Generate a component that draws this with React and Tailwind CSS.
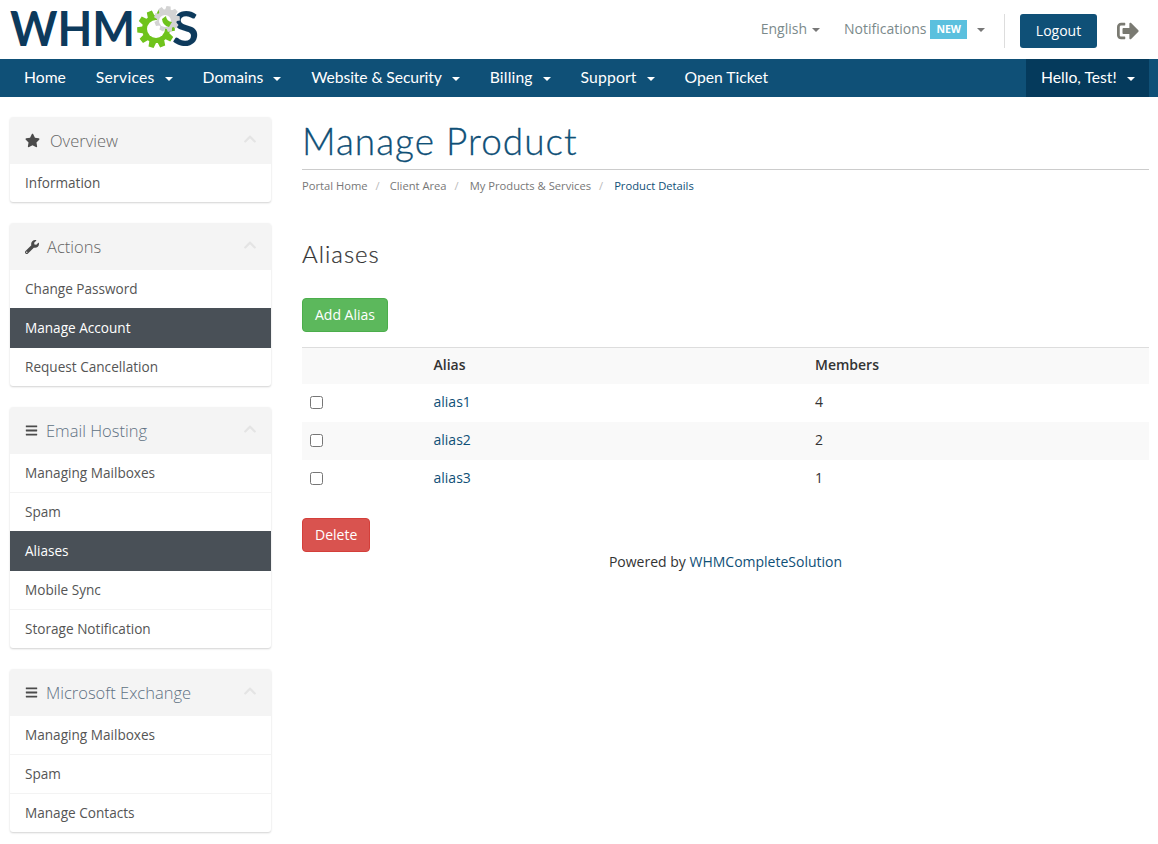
import React from "react";
import { FaStar, FaWrench, FaBars, FaChevronUp, FaSignOutAlt } from "react-icons/fa";

const gearPoints = (cx, cy, outer, inner, teeth) => {
  const pts = [];
  const step = (Math.PI * 2) / teeth;
  for (let i = 0; i < teeth; i++) {
    const a = i * step;
    [
      [-0.5, inner],
      [-0.3, outer],
      [0.15, outer],
      [0.3, inner],
    ].forEach(([f, r]) => {
      const t = a + f * step;
      pts.push(`${(cx + Math.cos(t) * r).toFixed(1)},${(cy + Math.sin(t) * r).toFixed(1)}`);
    });
  }
  return pts.join(" ");
};

const Logo = () => (
  <svg width="210" height="59" viewBox="0 0 210 59" className="block shrink-0">
    <text x="10" y="46" fontFamily="Lato" fontWeight="700" fontSize="48" fill="#0d3a5c" textLength="125" lengthAdjust="spacingAndGlyphs">
      WHM
    </text>
    <text x="172" y="46" fontFamily="Lato" fontWeight="700" fontSize="48" fill="#0d3a5c" textLength="27" lengthAdjust="spacingAndGlyphs">
      S
    </text>
    <polygon points={gearPoints(156, 29, 19, 14, 10)} fill="#6fc31c" />
    <circle cx="156" cy="29" r="9" fill="#fff" />
    <polygon points={gearPoints(167, 19, 13, 10, 9)} fill="#d3d3d3" />
    <circle cx="165" cy="21" r="6" fill="#fff" />
    <path d="M166 16 A6 6 0 0 0 172 22 L169 27 A9 9 0 0 1 162 19 Z" fill="#6fc31c" />
  </svg>
);

const Caret = ({ className = "" }) => (
  <span className={`inline-block w-0 h-0 border-x-[4px] border-x-transparent border-t-[4px] ${className}`} />
);

const navItems = [
  ["Home", false, ""],
  ["Services", true, "tracking-[0.25px]"],
  ["Domains", true, ""],
  ["Website & Security", true, "tracking-[-0.1px]"],
  ["Billing", true, "tracking-[0.15px]"],
  ["Support", true, "tracking-[0.15px]"],
  ["Open Ticket", false, ""],
];

const panels = [
  { title: "Overview", icon: <FaStar className="text-[15px] text-[#4b4b4b]" />, gap: "ml-[10px]", items: ["Information"] },
  { title: "Actions", icon: <FaWrench className="text-[14px] text-[#4b4b4b]" />, gap: "ml-[8px]", items: ["Change Password", "*Manage Account", "Request Cancellation"] },
  { title: "Email Hosting", icon: <FaBars className="text-[13px] text-[#4b4b4b]" />, gap: "ml-[8px]", titleColor: "text-[#5f7183]", items: ["Managing Mailboxes", "Spam", "*Aliases", "Mobile Sync", "Storage Notification"] },
  { title: "Microsoft Exchange", icon: <FaBars className="text-[13px] text-[#4b4b4b]" />, gap: "ml-[8px]", titleColor: "text-[#5f7183]", items: ["Managing Mailboxes", "Spam", "Manage Contacts"] },
];

const Panel = ({ title, icon, gap, titleColor, items }) => (
  <div className="mb-[21px] rounded-[3px] bg-white shadow-[0_1px_2px_rgba(0,0,0,0.18)]">
    <div className="flex h-[47px] items-center rounded-t-[3px] bg-[#f4f4f4] pl-[15px] pr-[14px]">
      {icon}
      <span className={`${gap} mt-[2px] font-['Open_Sans'] text-[16.5px] font-light ${titleColor || "text-[#666]"}`}>{title}</span>
      <FaChevronUp className="ml-auto mb-[4px] text-[14px] text-[#e4e4e4]" />
    </div>
    {items.map((item, i) => {
      const active = item.startsWith("*");
      const next = items[i + 1];
      const plain = i === items.length - 1 || (next && next.startsWith("*"));
      return active ? (
        <div key={item} className="flex h-[40px] items-center bg-[#495057] px-[15px] text-[13.6px] text-white">
          {item.slice(1)}
        </div>
      ) : (
        <div key={item} className={`flex items-center px-[15px] text-[13.6px] text-[#555] ${plain ? "h-[38px]" : "h-[39px] border-b border-[#f3f3f3]"}`}>
          {item}
        </div>
      );
    })}
  </div>
);

const rows = [
  ["alias1", "4"],
  ["alias2", "2"],
  ["alias3", "1"],
];

export default function App() {
  return (
    <div className="min-h-[844px] bg-white font-['Open_Sans',sans-serif] text-[14px] text-[#333]">
      <header className="flex h-[59px] items-start">
        <Logo />
        <div className="ml-auto flex items-center pt-[14px] pr-[19px]">
          <span className="flex items-center text-[14px] text-[#7b8a8b] -mt-[5px]">
            English <Caret className="ml-[5px] mt-[2px] border-t-[#777]" />
          </span>
          <span className="ml-[24px] flex items-center text-[14px] text-[#7b8a8b] -mt-[5px]">
            Notifications
            <span className="ml-[4px] mt-[2px] bg-[#5bc0de] px-[6px] text-[10.5px] font-bold leading-[19px] text-white">NEW</span>
            <Caret className="ml-[10px] mt-[2px] border-t-[#777]" />
          </span>
          <div className="ml-[19px] h-[34px] w-px bg-[#ddd]" />
          <button className="ml-[15px] h-[34px] w-[77px] rounded-[3px] bg-[#0f5077] pb-[2px] text-[14px] font-medium text-white">Logout</button>
          <FaSignOutAlt className="ml-[20px] text-[22px] text-[#7a7a72]" />
        </div>
      </header>

      <nav className="flex h-[38px] items-center bg-[#0f5077] pl-[9px] font-['Lato',sans-serif] text-[15.7px] text-white">
        {navItems.map(([label, caret, spacing]) => (
          <span key={label} className={`flex h-full items-center px-[15px] pb-[1px] ${spacing}`}>
            {label}
            {caret && <Caret className="ml-[10px] mt-[2px] border-t-white" />}
          </span>
        ))}
        <span className="ml-auto mr-[9px] flex h-full w-[123px] items-center bg-[#053a5c] pl-[15px] pb-[1px]">
          Hello, Test!
          <Caret className="ml-[10px] mt-[2px] border-t-white" />
        </span>
      </nav>

      <div className="flex pt-[20px] pl-[10px] pr-[9px]">
        <aside className="w-[261px] shrink-0">
          {panels.map((p) => (
            <Panel key={p.title} {...p} />
          ))}
        </aside>

        <main className="ml-[31px] flex-1">
          <h1 className="mt-[4px] font-['Lato',sans-serif] text-[37px] font-light leading-[40px] tracking-[1px] text-[#0f5077] [-webkit-text-stroke:0.3px]">Manage Product</h1>
          <div className="mt-[8px] border-t border-[#ccc] pt-[8px] text-[11.2px] leading-[15px] text-[#777]">
            <span>Portal Home</span>
            <span className="ml-[8px] mr-[10px] text-[#bbb]">/</span>
            <span>Client Area</span>
            <span className="ml-[8px] mr-[11px] text-[#bbb]">/</span>
            <span>My Products &amp; Services</span>
            <span className="ml-[8px] mr-[11px] text-[#bbb]">/</span>
            <span className="text-[#0f5077]">Product Details</span>
          </div>

          <h2 className="mt-[47px] font-['Lato',sans-serif] text-[24px] font-light leading-[28px] tracking-[1px] text-[#333] [-webkit-text-stroke:0.2px]">Aliases</h2>

          <button className="mt-[30px] block h-[34px] rounded-[4px] border border-[#4cae4c] bg-[#5cb85c] px-[12px] pb-[2px] text-[14px] text-white">Add Alias</button>

          <table className="mt-[15px] w-full border-collapse">
            <thead>
              <tr className="h-[36px] border-t border-[#ddd] bg-[#f9f9f9] text-left font-semibold">
                <th className="w-[131.5px] font-semibold"></th>
                <th className="w-[381.5px] pb-[2px] font-semibold">Alias</th>
                <th className="pb-[2px] font-semibold">Members</th>
              </tr>
            </thead>
            <tbody>
              {rows.map(([name, count], i) => (
                <tr key={name} className={`h-[38px] ${i === 1 ? "bg-[#f9f9f9]" : ""}`}>
                  <td className="pl-[8px]">
                    <input type="checkbox" className="block h-[13px] w-[13px]" />
                  </td>
                  <td className="pb-[2px] text-[#0f5077]">{name}</td>
                  <td className="pb-[2px]">{count}</td>
                </tr>
              ))}
            </tbody>
          </table>

          <button className="mt-[20px] block h-[34px] rounded-[4px] border border-[#d43f3a] bg-[#d9534f] px-[12px] pb-[1px] text-[14px] text-white">Delete</button>

          <p className="text-center leading-[20px]">
            Powered by <span className="text-[#0f5077]">WHMCompleteSolution</span>
          </p>
        </main>
      </div>
    </div>
  );
}
